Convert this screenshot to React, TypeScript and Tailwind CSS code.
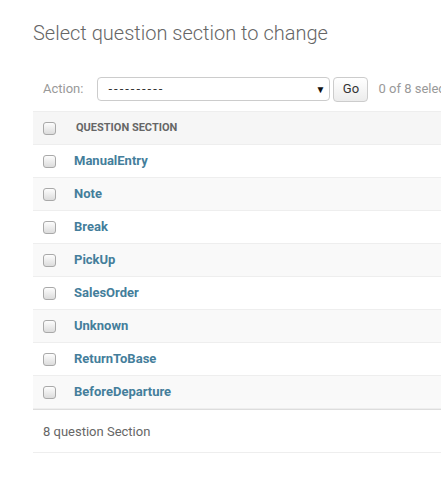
const rows = ["ManualEntry", "Note", "Break", "PickUp", "SalesOrder", "Unknown", "ReturnToBase", "BeforeDeparture"]

function Box() {
    return (
        <div className="w-[13px] h-[13px] rounded-[3px] border border-[#a9a9a9] bg-gradient-to-b from-[#fdfdfd] to-[#dcdcdc]" />
    )
}

export default function App() {
    return (
        <div className="w-[441px] h-[494px] overflow-hidden bg-white font-['Roboto','Liberation_Sans',sans-serif]">
            <div className="w-[900px] pl-[33px] pt-[21px]">
                <h1 className="text-[20px] leading-[24px] font-light text-[#666] mb-[22px]">
                    Select question section to change
                </h1>

                <div className="flex items-center h-[44px] px-[10px] text-[13px]">
                    <span className="text-[#999] mr-[14px]">Action:</span>
                    <div className="w-[233px] h-[24px] border border-[#ccc] rounded-[4px] flex items-center justify-between pl-[10px] pr-[4px] text-[#333]">
                        <span className="tracking-[2px]">----------</span>
                        <span className="text-[10px] text-[#111]">▼</span>
                    </div>
                    <div className="ml-[3px] w-[35px] h-[25px] border border-[#ccc] rounded-[4px] bg-gradient-to-b from-white to-[#ececec] flex items-center justify-center text-[#333]">
                        Go
                    </div>
                    <span className="ml-[10px] text-[#999]">0 of 8 selected</span>
                </div>

                <div className="flex items-center h-[34px] bg-[#f6f6f6] border-y border-[#eee]">
                    <div className="w-[41px] flex justify-end pr-[18px]"><Box /></div>
                    <span className="pl-[2px] text-[11px] font-bold text-[#666] uppercase">Question section</span>
                </div>

                {rows.map((r, i) => (
                    <div key={r} className={`flex items-center h-[33px] border-b border-[#eee] ${i % 2 ? "bg-[#f9f9f9]" : "bg-white"}`}>
                        <div className="w-[41px] flex justify-end pr-[18px]"><Box /></div>
                        <span className="text-[13px] font-bold text-[#447e9b]">{r}</span>
                    </div>
                ))}

                <div className="h-[44px] flex items-center pl-[10px] pt-[2px] border-t border-[#ddd] border-b border-b-[#eee] text-[13px] text-[#666]">
                    8 question Section
                </div>
            </div>
        </div>
    )
}
